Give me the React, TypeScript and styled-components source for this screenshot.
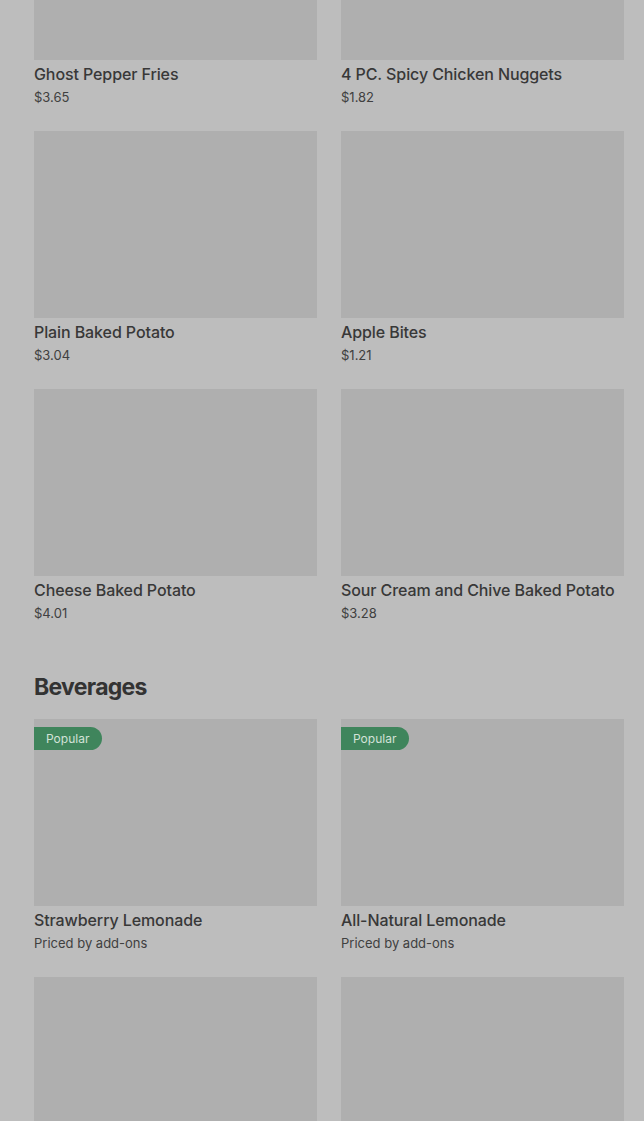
import styled, { createGlobalStyle } from "styled-components";

const GlobalStyle = createGlobalStyle`
  html, body {
    margin: 0;
    padding: 0;
    overflow: hidden;
    background: #bdbdbd;
  }
  body {
    font-family: Inter, "Noto Sans", "Liberation Sans", sans-serif;
    color: #363636;
  }
`;

const Page = styled.main`
  padding: 0 20px 0 34px;
  margin-top: -127px;
`;

const Section = styled.section`
  & + & {
    margin-top: 48px;
  }
`;

const SectionTitle = styled.h2`
  margin: 0 0 16px;
  font-size: 23px;
  line-height: 32px;
  font-weight: 700;
  letter-spacing: -0.7px;
  color: #333;
`;

const Grid = styled.div`
  display: grid;
  grid-template-columns: repeat(2, 283px);
  column-gap: 24px;
  row-gap: 24px;
`;

const Card = styled.article`
  display: flex;
  flex-direction: column;
`;

const Thumb = styled.div`
  position: relative;
  height: 187px;
  background: #afafaf;
`;

const Badge = styled.span`
  position: absolute;
  top: 8px;
  left: 0;
  height: 23px;
  padding: 0 13px 0 12px;
  display: flex;
  align-items: center;
  border-radius: 0 12px 12px 0;
  background: #3f855c;
  color: #d3e2d8;
  font-size: 12px;
`;

const Name = styled.h3`
  margin: 2px 0 0;
  font-size: 16px;
  line-height: 24px;
  font-weight: 500;
  letter-spacing: -0.1px;
  color: #383838;
`;

const Price = styled.p`
  margin: 1px 0 0;
  font-size: 13px;
  line-height: 20px;
  font-weight: 400;
  color: #404040;
`;

type Item = { name: string; price: string; popular?: boolean };

const sides: Item[] = [
  { name: "Ghost Pepper Fries", price: "$3.65" },
  { name: "4 PC. Spicy Chicken Nuggets", price: "$1.82" },
  { name: "Plain Baked Potato", price: "$3.04" },
  { name: "Apple Bites", price: "$1.21" },
  { name: "Cheese Baked Potato", price: "$4.01" },
  { name: "Sour Cream and Chive Baked Potato", price: "$3.28" },
];

const beverages: Item[] = [
  { name: "Strawberry Lemonade", price: "Priced by add-ons", popular: true },
  { name: "All-Natural Lemonade", price: "Priced by add-ons", popular: true },
  { name: "Iced Tea", price: "$2.10" },
  { name: "Sweet Tea", price: "$2.10" },
];

function MenuCard({ item }: { item: Item }) {
  return (
    <Card>
      <Thumb>{item.popular && <Badge>Popular</Badge>}</Thumb>
      <Name>{item.name}</Name>
      <Price>{item.price}</Price>
    </Card>
  );
}

export default function App() {
  return (
    <>
      <GlobalStyle />
      <Page>
        <Section>
          <Grid>
            {sides.map((item) => (
              <MenuCard key={item.name} item={item} />
            ))}
          </Grid>
        </Section>
        <Section>
          <SectionTitle>Beverages</SectionTitle>
          <Grid>
            {beverages.map((item) => (
              <MenuCard key={item.name} item={item} />
            ))}
          </Grid>
        </Section>
      </Page>
    </>
  );
}
